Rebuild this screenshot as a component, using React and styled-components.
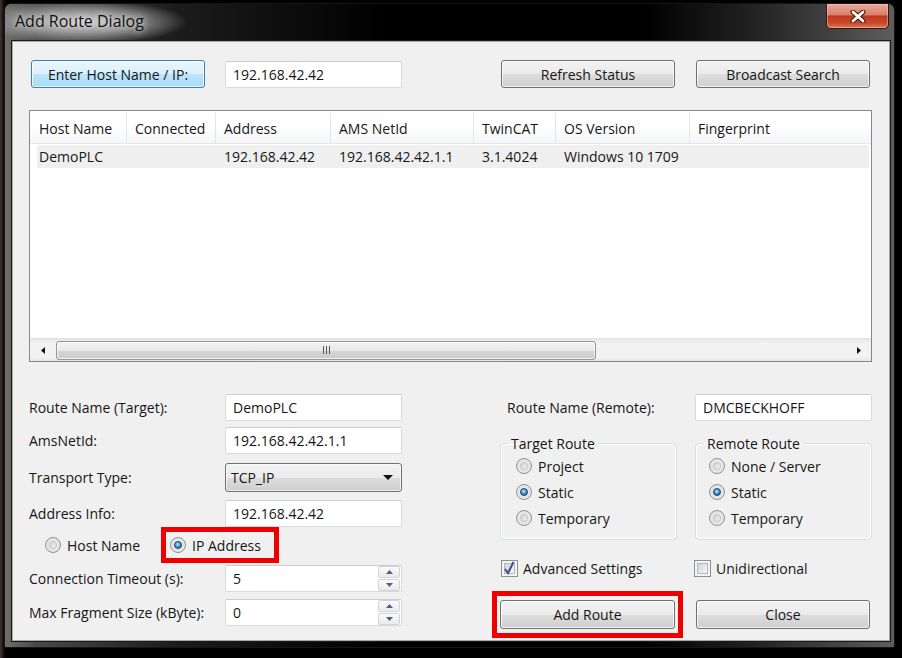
import React from 'react';
import styled, { createGlobalStyle } from 'styled-components';

const GlobalStyle = createGlobalStyle`
  html, body { margin:0; padding:0; background:#000; }
  body {
    font-family: "Open Sans", "Noto Sans", sans-serif;
    font-size:14px;
    color:#161616;
  }
`;

const Screen = styled.div`
  width:902px;
  height:658px;
  overflow:hidden;
  box-sizing:border-box;
  padding:3px 0 0 4px;
  background:linear-gradient(90deg, #4b3434 0, #2a1f1f 2px, #0b0b0b 4px, #000 6px);
`;

const Window = styled.div`
  width:891px;
  height:645px;
  box-sizing:border-box;
  border:1px solid #151515;
  border-radius:7px 7px 2px 2px;
  background:
    radial-gradient(ellipse 105px 22px at 78px 18px, rgba(215,215,215,0.95) 0%, rgba(175,175,175,0.75) 50%, rgba(0,0,0,0) 100%),
    linear-gradient(90deg, #6e6e6e 0, #4a4a4a 30px, #1c1c1c 170px, #000 380px, #000 640px, #262626 760px, #5e5e5e 891px);
  display:flex;
  flex-direction:column;
`;

const TitleBar = styled.div`
  height:37px;
  display:flex;
  justify-content:space-between;
  align-items:flex-start;
`;

const Title = styled.div`
  padding-left:10px;
  line-height:35px;
  font-family:"Open Sans", "Noto Sans", sans-serif;
  font-size:16px;
  color:#111;
  text-shadow:0 0 6px rgba(235,235,235,0.9), 0 0 12px rgba(220,220,220,0.6);
`;

const CloseX = styled.div`
  width:63px;
  height:25px;
  margin-right:5px;
  box-sizing:border-box;
  border:1px solid #3a1610;
  border-top:none;
  border-radius:0 0 5px 5px;
  background:linear-gradient(#e9a899 0%, #d9806c 45%, #c0391f 50%, #c94a2d 80%, #dd7a5a 100%);
  box-shadow:inset 0 0 0 1px rgba(255,210,200,0.45);
  display:flex;
  align-items:center;
  justify-content:center;
`;

const Client = styled.div`
  margin:0 4px 0 7px;
  height:600px;
  box-sizing:border-box;
  border:1px solid #a8a8a8;
  box-shadow:0 0 0 1px #1a1a1a;
  background:#f0f0f0;
  padding:18px 17px 0 16px;
  display:flex;
  flex-direction:column;
`;

const TopRow = styled.div`
  height:28px;
  display:flex;
  align-items:center;
`;

const Button = styled.div`
  width:${p => p.$w || 174}px;
  height:${p => p.$h || 28}px;
  box-sizing:border-box;
  border:1px solid ${p => (p.$blue ? '#3c7fb1' : '#707070')};
  border-radius:3px;
  background:${p => p.$blue
    ? 'linear-gradient(#eaf6fd 0%, #d9f0fc 50%, #bee6fd 51%, #a7d9f5 100%)'
    : 'linear-gradient(#f2f2f2 0%, #ebebeb 50%, #dddddd 51%, #cfcfcf 100%)'};
  box-shadow:inset 0 0 0 1px rgba(255,255,255,0.75);
  display:flex;
  align-items:center;
  justify-content:center;
  margin-left:${p => p.$ml || 0};
  margin-right:${p => p.$mr || 0}px;
  flex-shrink:0;
`;

const TextBox = styled.div`
  width:177px;
  height:${p => p.$h || 27}px;
  box-sizing:border-box;
  border:1px solid #d6dade;
  border-top-color:#c9ccd1;
  border-radius:2px;
  background:#fff;
  padding-left:7px;
  display:flex;
  align-items:center;
  margin-left:${p => p.$ml || 0}px;
  flex-shrink:0;
`;

const ListBox = styled.div`
  margin-top:22px;
  height:252px;
  box-sizing:border-box;
  border:1px solid #828790;
  background:#fff;
  display:flex;
  flex-direction:column;
`;

const HeaderRow = styled.div`
  margin-top:2px;
  height:30px;
  display:flex;
  background:linear-gradient(#fff 0%, #fff 45%, #f5f6f7 100%);
  border-bottom:1px solid #e8e8e8;
`;

const HeaderCell = styled.div`
  width:${p => p.$w}px;
  flex:${p => (p.$w ? 'none' : 1)};
  box-sizing:border-box;
  padding-left:${p => p.$pl || 8}px;
  border-right:${p => (p.$w ? '1px solid #e3e4e6' : 'none')};
  display:flex;
  align-items:center;
  white-space:nowrap;
`;

const DataRow = styled.div`
  margin:1px 2px 0 7px;
  height:23px;
  display:flex;
  background:#efefef;
`;

const DataCell = styled.div`
  width:${p => p.$w}px;
  flex:none;
  box-sizing:border-box;
  padding-left:${p => p.$pl || 8}px;
  display:flex;
  align-items:center;
  white-space:nowrap;
  overflow:hidden;
`;

const ScrollBar = styled.div`
  margin-top:auto;
  height:22px;
  display:flex;
  align-items:center;
  background:linear-gradient(#e8e8e8, #f2f2f2 20%, #f2f2f2 80%, #e8e8e8);
  border-top:1px solid #e4e4e4;
`;

const ScrollArrow = styled.div`
  width:${p => p.$w}px;
  height:100%;
  display:flex;
  align-items:center;
  justify-content:center;
  flex:none;
`;

const Thumb = styled.div`
  width:540px;
  height:19px;
  box-sizing:border-box;
  border:1px solid #979797;
  border-radius:3px;
  background:linear-gradient(#f3f3f3 0%, #e8e8e8 50%, #d6d6d6 51%, #cbcbcb 100%);
  box-shadow:inset 0 0 0 1px rgba(255,255,255,0.7);
  display:flex;
  align-items:center;
  justify-content:center;
  flex:none;
`;

const Track = styled.div`
  flex:1;
`;

const Lower = styled.div`
  margin-top:32px;
  display:flex;
  justify-content:space-between;
`;

const Column = styled.div`
  width:${p => p.$w}px;
  display:flex;
  flex-direction:column;
`;

const FieldRow = styled.div`
  display:flex;
  align-items:center;
  height:${p => p.$h || 27}px;
  margin-top:${p => p.$mt || 0}px;
`;

const Label = styled.div`
  width:${p => p.$w || 196}px;
  padding-left:${p => p.$pl || 0}px;
  box-sizing:border-box;
  white-space:nowrap;
  flex-shrink:0;
`;

const Combo = styled.div`
  width:177px;
  height:29px;
  box-sizing:border-box;
  border:1px solid #707070;
  border-radius:3px;
  background:linear-gradient(#f2f2f2 0%, #ebebeb 50%, #dddddd 51%, #cfcfcf 100%);
  box-shadow:inset 0 0 0 1px rgba(255,255,255,0.7);
  padding:0 8px 0 5px;
  display:flex;
  align-items:center;
  justify-content:space-between;
`;

const SpinText = styled.div`
  flex:1;
`;

const SpinButtons = styled.div`
  width:22px;
  align-self:stretch;
  display:flex;
  flex-direction:column;
  gap:1px;
`;

const SpinBtn = styled.div`
  flex:1;
  border:1px solid #d2d4d7;
  border-radius:2px;
  background:linear-gradient(#fbfbfb, #eaeaea);
  display:flex;
  align-items:center;
  justify-content:center;
`;

const RadioItem = styled.div`
  display:flex;
  align-items:center;
  gap:6px;
  width:${p => (p.$w ? `${p.$w}px` : 'auto')};
  padding-left:${p => p.$pl || 0}px;
  box-sizing:border-box;
  height:${p => (p.$h ? `${p.$h}px` : 'auto')};
`;

const RadioDot = styled.span`
  width:16px;
  height:16px;
  border-radius:50%;
  box-sizing:border-box;
  border:1px solid #8f9091;
  background:radial-gradient(circle at 50% 45%, #f6f6f6 0%, #e2e2e2 55%, #f9f9f9 100%);
  display:flex;
  align-items:center;
  justify-content:center;
  flex:none;
  &::after {
    content:'';
    width:8px;
    height:8px;
    border-radius:50%;
    box-sizing:border-box;
    background:${p => (p.$on
      ? 'radial-gradient(circle at 45% 38%, #c9ecff 0%, #49a6e0 40%, #1b4f80 100%)'
      : 'linear-gradient(135deg, #d0d0d0, #f4f4f4)')};
    border:1px solid ${p => (p.$on ? '#1d3f63' : '#c4c4c4')};
  }
`;

const Highlight = styled.div`
  width:118px;
  height:36px;
  box-sizing:border-box;
  border:5px solid #ee0000;
  padding-left:4px;
  display:flex;
  align-items:center;
  flex:none;
`;

const GroupRow = styled.div`
  margin-top:13px;
  display:flex;
  justify-content:space-between;
`;

const Group = styled.fieldset`
  width:177px;
  height:106px;
  margin:0;
  box-sizing:border-box;
  border:1px solid #d5dfe5;
  border-radius:4px;
  box-shadow:inset 0 0 0 1px #fff;
  padding:0 0 0 ${p => p.$pl || 15}px;
  display:flex;
  flex-direction:column;
`;

const Legend = styled.legend`
  padding:0 3px;
  margin-left:${p => p.$ml || 0}px;
  line-height:19px;
`;

const GroupRadio = styled(RadioItem)`
  height:26px;
`;

const CheckRow = styled.div`
  margin-top:19px;
  height:18px;
  display:flex;
  align-items:center;
`;

const CheckItem = styled.div`
  display:flex;
  align-items:center;
  gap:5px;
  width:${p => (p.$w ? `${p.$w}px` : 'auto')};
  padding-left:${p => p.$pl || 0}px;
  box-sizing:border-box;
`;

const CheckBox = styled.span`
  width:17px;
  height:17px;
  box-sizing:border-box;
  border:1px solid #8e8f8f;
  background:#f4f4f4;
  padding:2px;
  display:flex;
  flex:none;
  & > span {
    flex:1;
    border:1px solid #b4b8bd;
    background:linear-gradient(135deg, #cfd3d8, #f7f7f7);
    position:relative;
  }
  svg { position:absolute; left:-3px; top:-4px; }
`;

const ButtonRow = styled.div`
  margin-top:14px;
  display:flex;
  align-items:center;
`;

const ButtonFrame = styled.div`
  width:191px;
  height:47px;
  box-sizing:border-box;
  border:5px solid #ee0000;
  margin-left:-8px;
  display:flex;
  align-items:center;
  justify-content:center;
  flex:none;
`;

const headers = [
  ['Host Name', 97, 9],
  ['Connected', 89],
  ['Address', 115],
  ['AMS NetId', 143],
  ['TwinCAT', 82],
  ['OS Version', 134],
  ['Fingerprint'],
];

const row = [
  ['DemoPLC', 90, 2],
  ['', 89],
  ['192.168.42.42', 115],
  ['192.168.42.42.1.1', 143],
  ['3.1.4024', 82],
  ['Windows 10 1709', 134],
];

const Tri = ({ dir, color = '#111', w = 5, h = 8 }) => {
  const pts = {
    left: `${w},0 ${w},${h} 0,${h / 2}`,
    right: `0,0 0,${h} ${w},${h / 2}`,
    up: `0,${h} ${w},${h} ${w / 2},0`,
    down: `0,0 ${w},0 ${w / 2},${h}`,
  }[dir];
  return (
    <svg width={w} height={h} viewBox={`0 0 ${w} ${h}`}>
      <polygon points={pts} fill={color} />
    </svg>
  );
};

const Radio = ({ on, children, ...rest }) => (
  <RadioItem {...rest}>
    <RadioDot $on={on} />
    <span>{children}</span>
  </RadioItem>
);

const Check = ({ on, children, ...rest }) => (
  <CheckItem {...rest}>
    <CheckBox>
      <span>
        {on && (
          <svg width="14" height="16" viewBox="0 0 14 16">
            <path d="M3 9 L6 13 L11.5 2" fill="none" stroke="#3a4f8c" strokeWidth="2" />
          </svg>
        )}
      </span>
    </CheckBox>
    <span>{children}</span>
  </CheckItem>
);

const Spin = ({ value }) => (
  <TextBox style={{ paddingRight: 1 }}>
    <SpinText>{value}</SpinText>
    <SpinButtons>
      <SpinBtn><Tri dir="up" color="#4c6086" w={7} h={4} /></SpinBtn>
      <SpinBtn><Tri dir="down" color="#4c6086" w={7} h={4} /></SpinBtn>
    </SpinButtons>
  </TextBox>
);

export default function App() {
  return (
    <Screen>
      <GlobalStyle />
      <Window>
        <TitleBar>
          <Title>Add Route Dialog</Title>
          <CloseX>
            <svg width="16" height="13" viewBox="0 0 16 13">
              <path d="M3 2 L13 11 M13 2 L3 11" stroke="#4a1a12" strokeWidth="5" strokeLinecap="round" />
              <path d="M3 2 L13 11 M13 2 L3 11" stroke="#fff" strokeWidth="2.8" strokeLinecap="round" />
            </svg>
          </CloseX>
        </TitleBar>

        <Client>
          <TopRow>
            <Button $blue $ml="2px">Enter Host Name / IP:</Button>
            <TextBox $ml={20}>192.168.42.42</TextBox>
            <Button $ml="auto">Refresh Status</Button>
            <Button $ml="21px" $mr={2}>Broadcast Search</Button>
          </TopRow>

          <ListBox>
            <HeaderRow>
              {headers.map(([t, w, pl]) => (
                <HeaderCell key={t} $w={w} $pl={pl}>{t}</HeaderCell>
              ))}
            </HeaderRow>
            <DataRow>
              {row.map(([t, w, pl], i) => (
                <DataCell key={i} $w={w} $pl={pl}>{t}</DataCell>
              ))}
            </DataRow>
            <ScrollBar>
              <ScrollArrow $w={26}><Tri dir="left" w={4} h={7} /></ScrollArrow>
              <Thumb>
                <svg width="9" height="8" viewBox="0 0 9 8">
                  <path d="M1.5 0 V8 M4.5 0 V8 M7.5 0 V8" stroke="#555" strokeWidth="1" />
                </svg>
              </Thumb>
              <Track />
              <ScrollArrow $w={24}><Tri dir="right" w={4} h={7} /></ScrollArrow>
            </ScrollBar>
          </ListBox>

          <Lower>
            <Column $w={373}>
              <FieldRow>
                <Label>Route Name (Target):</Label>
                <TextBox>DemoPLC</TextBox>
              </FieldRow>
              <FieldRow $mt={6}>
                <Label>AmsNetId:</Label>
                <TextBox>192.168.42.42.1.1</TextBox>
              </FieldRow>
              <FieldRow $mt={9} $h={29}>
                <Label>Transport Type:</Label>
                <Combo>
                  <span>TCP_IP</span>
                  <Tri dir="down" w={10} h={5} />
                </Combo>
              </FieldRow>
              <FieldRow $mt={8}>
                <Label>Address Info:</Label>
                <TextBox>192.168.42.42</TextBox>
              </FieldRow>
              <FieldRow $h={36}>
                <Radio $w={132} $pl={16}>Host Name</Radio>
                <Highlight>
                  <Radio on>IP Address</Radio>
                </Highlight>
              </FieldRow>
              <FieldRow $mt={2}>
                <Label>Connection Timeout (s):</Label>
                <Spin value="5" />
              </FieldRow>
              <FieldRow $mt={7}>
                <Label>Max Fragment Size (kByte):</Label>
                <Spin value="0" />
              </FieldRow>
            </Column>

            <Column $w={372}>
              <FieldRow>
                <Label $w={195} $pl={7}>Route Name (Remote):</Label>
                <TextBox>DMCBECKHOFF</TextBox>
              </FieldRow>
              <GroupRow>
                <Group $pl={15}>
                  <Legend $ml={-8}>Target Route</Legend>
                  <GroupRadio as={Radio}>Project</GroupRadio>
                  <GroupRadio as={Radio} on>Static</GroupRadio>
                  <GroupRadio as={Radio}>Temporary</GroupRadio>
                </Group>
                <Group $pl={13}>
                  <Legend $ml={-5}>Remote Route</Legend>
                  <GroupRadio as={Radio}>None / Server</GroupRadio>
                  <GroupRadio as={Radio} on>Static</GroupRadio>
                  <GroupRadio as={Radio}>Temporary</GroupRadio>
                </Group>
              </GroupRow>
              <CheckRow>
                <Check on $w={194} $pl={1}>Advanced Settings</Check>
                <Check>Unidirectional</Check>
              </CheckRow>
              <ButtonRow>
                <ButtonFrame>
                  <Button $w={175} $h={29}>Add Route</Button>
                </ButtonFrame>
                <Button $ml="13px" $h={29}>Close</Button>
              </ButtonRow>
            </Column>
          </Lower>
        </Client>
      </Window>
    </Screen>
  );
}
